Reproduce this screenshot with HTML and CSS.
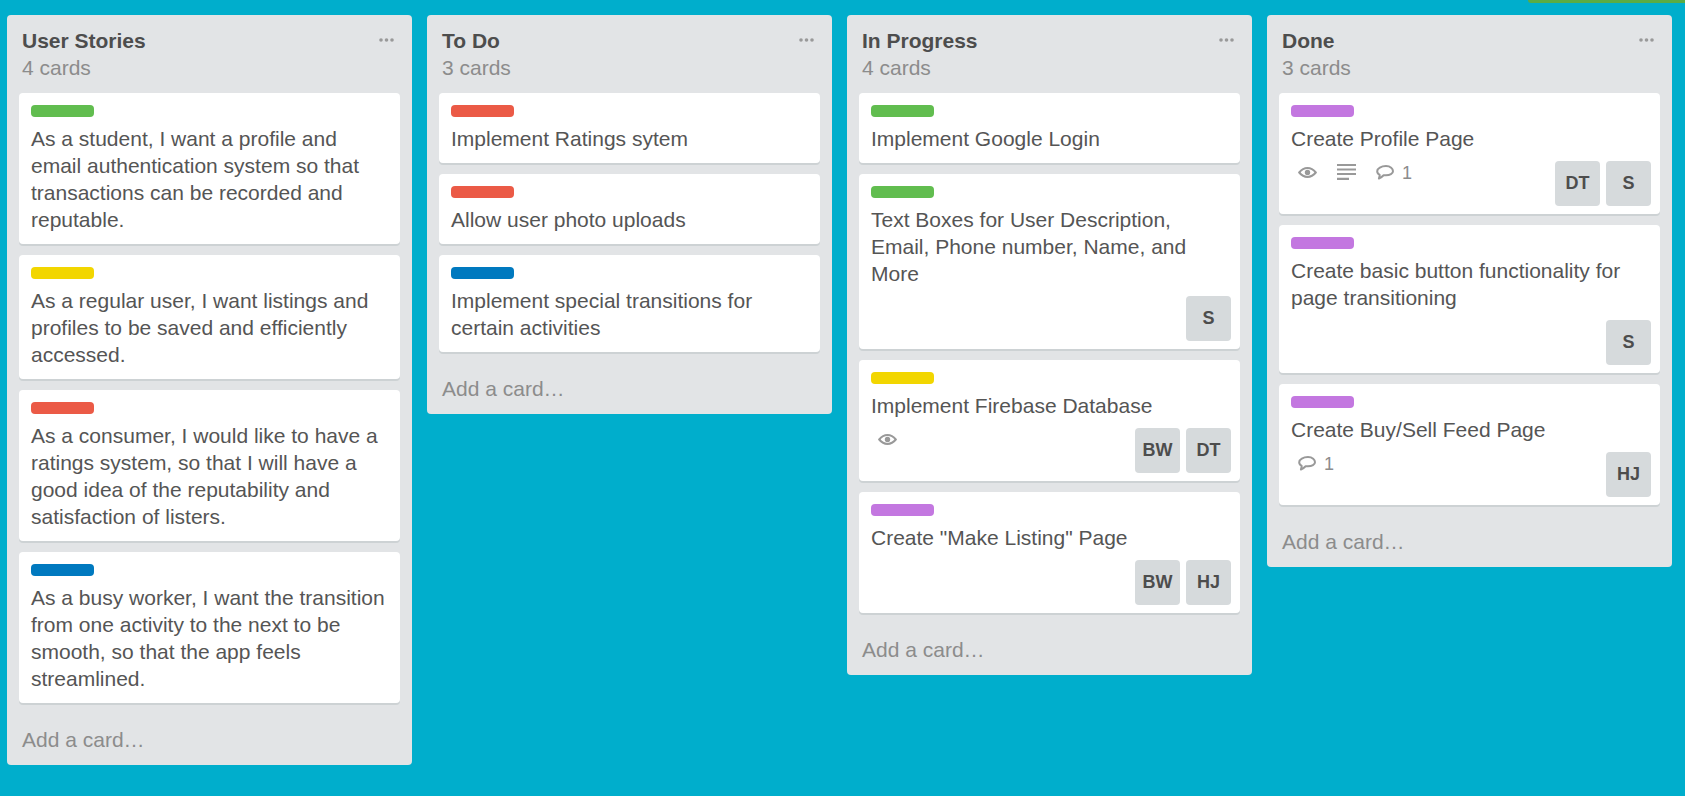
FILE: index.html
```html
<!DOCTYPE html>
<html lang="en">
<head>
<meta charset="utf-8">
<title>Board</title>
<link rel="stylesheet" href="styles.css">
</head>
<body>
<svg class="defs" width="0" height="0" aria-hidden="true">
  <symbol id="dots" viewBox="0 0 15 4"><circle cx="2" cy="2" r="1.8"/><circle cx="7.500" cy="2" r="1.800"/><circle cx="13" cy="2" r="1.800"/></symbol>
  <symbol id="eye" viewBox="0 0 19 11"><path d="M1.200 5.500C3.700 2.400 6.300 1.100 9.500 1.100S15.300 2.400 17.800 5.500C15.300 8.600 12.700 9.900 9.500 9.900S3.700 8.600 1.200 5.500Z" fill="none" stroke="currentColor" stroke-width="2"/><circle cx="9.500" cy="5.500" r="2.700" fill="currentColor"/></symbol>
  <symbol id="desc" viewBox="0 0 19 16"><path d="M0 1h19M0 5.500h19M0 10h19M0 14.800h12" fill="none" stroke="currentColor" stroke-width="2.200"/></symbol>
  <symbol id="comment" viewBox="0 0 18 15"><path d="M10 1.100C5.300 1.100 1.200 3.200 1.200 6.200c0 1.600.9 2.800 2.500 3.600-.1 1.200-.3 2.300-.8 3.800 1.900-.8 3.500-2 4.700-3.300H10c4 0 7-1.800 7-4.100S14.500 1.100 10 1.100Z" fill="none" stroke="currentColor" stroke-width="2" stroke-linejoin="round"/></symbol>
</svg>
<div class="topbar"><div class="topbar-accent"></div></div>
<main class="board">

  <section class="list">
    <header class="list-head">
      <div><h2 class="list-title">User Stories</h2><p class="list-count">4 cards</p></div>
      <svg class="menu-dots"><use href="#dots"/></svg>
    </header>
    <article class="card"><div class="label green"></div><p class="card-text">As a student, I want a profile and email authentication system so that transactions can be recorded and reputable.</p></article>
    <article class="card"><div class="label yellow"></div><p class="card-text">As a regular user, I want listings and profiles to be saved and efficiently accessed.</p></article>
    <article class="card"><div class="label red"></div><p class="card-text">As a consumer, I would like to have a ratings system, so that I will have a good idea of the reputability and satisfaction of listers.</p></article>
    <article class="card"><div class="label blue"></div><p class="card-text">As a busy worker, I want the transition from one activity to the next to be smooth, so that the app feels streamlined.</p></article>
    <div class="add-card">Add a card…</div>
  </section>

  <section class="list">
    <header class="list-head">
      <div><h2 class="list-title">To Do</h2><p class="list-count">3 cards</p></div>
      <svg class="menu-dots"><use href="#dots"/></svg>
    </header>
    <article class="card"><div class="label red"></div><p class="card-text">Implement Ratings sytem</p></article>
    <article class="card"><div class="label red"></div><p class="card-text">Allow user photo uploads</p></article>
    <article class="card"><div class="label blue"></div><p class="card-text">Implement special transitions for certain activities</p></article>
    <div class="add-card">Add a card…</div>
  </section>

  <section class="list">
    <header class="list-head">
      <div><h2 class="list-title">In Progress</h2><p class="list-count">4 cards</p></div>
      <svg class="menu-dots"><use href="#dots"/></svg>
    </header>
    <article class="card"><div class="label green"></div><p class="card-text">Implement Google Login</p></article>
    <article class="card"><div class="label green"></div><p class="card-text">Text Boxes for User Description, Email, Phone number, Name, and More</p>
      <div class="card-foot"><div class="badges"></div><div class="members"><span class="member">S</span></div></div></article>
    <article class="card"><div class="label yellow"></div><p class="card-text">Implement Firebase Database</p>
      <div class="card-foot"><div class="badges"><svg class="icon-eye"><use href="#eye"/></svg></div><div class="members"><span class="member">BW</span><span class="member">DT</span></div></div></article>
    <article class="card"><div class="label purple"></div><p class="card-text">Create "Make Listing" Page</p>
      <div class="card-foot"><div class="badges"></div><div class="members"><span class="member">BW</span><span class="member">HJ</span></div></div></article>
    <div class="add-card">Add a card…</div>
  </section>

  <section class="list">
    <header class="list-head">
      <div><h2 class="list-title">Done</h2><p class="list-count">3 cards</p></div>
      <svg class="menu-dots"><use href="#dots"/></svg>
    </header>
    <article class="card"><div class="label purple"></div><p class="card-text">Create Profile Page</p>
      <div class="card-foot"><div class="badges"><svg class="icon-eye"><use href="#eye"/></svg><svg class="icon-desc"><use href="#desc"/></svg><svg class="icon-comment"><use href="#comment"/></svg><span class="badge-num">1</span></div><div class="members"><span class="member">DT</span><span class="member">S</span></div></div></article>
    <article class="card"><div class="label purple"></div><p class="card-text">Create basic button functionality for page transitioning</p>
      <div class="card-foot"><div class="badges"></div><div class="members"><span class="member">S</span></div></div></article>
    <article class="card"><div class="label purple"></div><p class="card-text">Create Buy/Sell Feed Page</p>
      <div class="card-foot"><div class="badges"><svg class="icon-comment"><use href="#comment"/></svg><span class="badge-num">1</span></div><div class="members"><span class="member">HJ</span></div></div></article>
    <div class="add-card">Add a card…</div>
  </section>

</main>
</body>
</html>
```
FILE: styles.css
```css
* { box-sizing: border-box; }
html, body { margin: 0; height: 100%; }
body {
  background: #00aecc;
  font-family: "Liberation Sans", Arial, sans-serif;
  color: #4d4d4d;
  overflow: hidden;
}
.defs { display: block; height: 0; }
.topbar { display: flex; justify-content: flex-end; height: 3px; }
.topbar-accent { width: 157px; background: #5aac44; border-bottom-left-radius: 3px; }
.board { display: flex; align-items: flex-start; gap: 15px; padding: 12px 0 0 7px; }
.list {
  flex: 0 0 405px;
  background: #e2e4e6;
  border-radius: 4px;
  padding: 12px;
}
.list-head { display: flex; justify-content: space-between; align-items: flex-start; padding: 0 6px 12px 3px; }
.list-title { margin: 0; font-size: 21px; line-height: 27px; font-weight: 700; }
.list-count { margin: 0; font-size: 21px; line-height: 27px; color: #8c8c8c; }
.menu-dots { width: 15px; height: 4px; margin-top: 11px; fill: #999; }
.card {
  background: #fff;
  border-radius: 4px;
  box-shadow: 0 2px 0 #cdd2d4;
  padding: 12px 9px 11px 12px;
  margin-bottom: 11px;
}
.label { width: 63px; height: 12px; border-radius: 4px; margin-bottom: 8px; }
.green { background: #61bd4f; }
.yellow { background: #f2d600; }
.red { background: #eb5a46; }
.blue { background: #0079bf; }
.purple { background: #c377e0; }
.card-text { margin: 0; font-size: 21px; line-height: 27px; color: #555; }
.card-foot { display: flex; justify-content: space-between; align-items: flex-start; margin-top: 9px; margin-bottom: -3px; }
.badges { display: flex; align-items: center; color: #999; padding: 0 0 0 7px; height: 22px; }
.icon-eye { width: 19px; height: 11px; margin-right: 20px; }
.icon-desc { width: 19px; height: 16px; margin-right: 20px; }
.icon-comment { width: 18px; height: 15px; margin-right: 8px; }
.badge-num { font-size: 18px; line-height: 20px; color: #8c8c8c; margin-top: 2px; }
.members { display: flex; gap: 6px; }
.member {
  width: 45px;
  height: 45px;
  background: #d6dadc;
  border-radius: 4px;
  display: flex;
  align-items: center;
  justify-content: center;
  font-size: 18px;
  font-weight: 700;
}
.add-card { font-size: 21px; line-height: 27px; color: #8c8c8c; padding: 12px 3px 0; }
```
